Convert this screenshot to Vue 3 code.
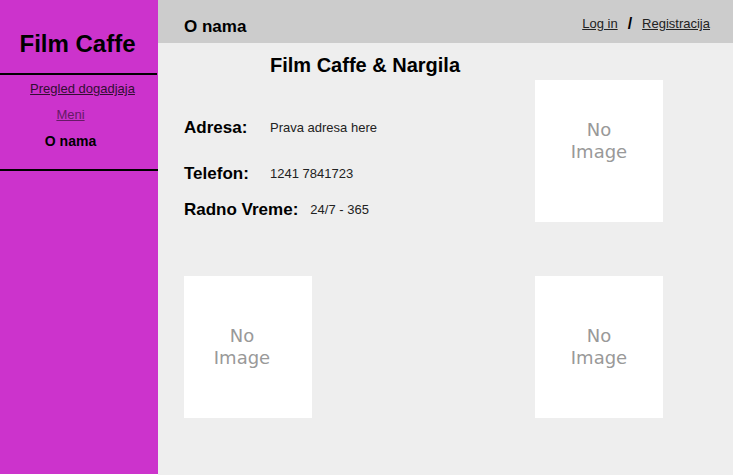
<script setup>
const venue = 'Film Caffe & Nargila'
const details = [
  { label: 'Adresa:', value: 'Prava adresa here' },
  { label: 'Telefon:', value: '1241 7841723' },
  { label: 'Radno Vreme:', value: '24/7 - 365' },
]
</script>

<template>
  <div class="page">
    <aside class="sidebar">
      <div class="brand">Film Caffe</div>
      <nav class="menu">
        <a href="#pregled">Pregled dogadjaja</a>
        <a href="#meni" class="visited">Meni</a>
        <span class="current" aria-current="page">O nama</span>
      </nav>
    </aside>
    <div class="content">
      <header class="topbar">
        <h1>O nama</h1>
        <div class="account">
          <a href="#login">Log in</a>
          <span class="slash">/</span>
          <a href="#registracija">Registracija</a>
        </div>
      </header>
      <main class="about">
        <section class="info">
          <h2>{{ venue }}</h2>
          <dl>
            <div v-for="item in details" :key="item.label" class="row">
              <dt>{{ item.label }}</dt>
              <dd>{{ item.value }}</dd>
            </div>
          </dl>
        </section>
        <div class="photo right top">No<br />Image</div>
        <div class="photo">No<br />Image</div>
        <div class="photo right">No<br />Image</div>
      </main>
    </div>
  </div>
</template>

<style>
body {
  background: #fff;
}
</style>

<style scoped>
.page {
  display: flex;
  min-height: 100vh;
  padding-right: 3px;
  box-sizing: border-box;
  font-family: "Liberation Sans", Arial, sans-serif;
  font-size: 13px;
  line-height: 16px;
  color: #222;
}
.sidebar {
  flex: 0 0 158px;
  margin-bottom: 1px;
  background: #cc33cc;
}
.brand {
  margin-right: 1px;
  padding: 30px 2px 15px 0;
  border-bottom: 2px solid #000;
  font-size: 24px;
  line-height: 28px;
  font-weight: bold;
  text-align: center;
  color: #000;
}
.menu {
  display: flex;
  flex-direction: column;
  align-items: center;
  gap: 10px;
  padding: 6px 17px 20px 0;
  border-bottom: 2px solid #000;
}
a {
  color: #222;
  text-decoration: underline;
}
.menu a:first-child {
  margin-left: 24px;
}
.menu a {
  color: #330d33;
}
.menu .visited {
  color: #661a66;
}
.current {
  font-size: 14px;
  font-weight: bold;
  color: #000;
}
.content {
  flex: 1;
  min-width: 0;
  background: #eee;
}
.topbar {
  display: flex;
  align-items: flex-start;
  justify-content: space-between;
  padding: 16px 23px 6px 26px;
  background: #ccc;
}
h1,
dt {
  margin: 0;
  font-size: 17px;
  line-height: 20px;
  font-weight: bold;
  color: #000;
}
h1 {
  padding-top: 1px;
}
.account {
  display: flex;
  gap: 10px;
}
.slash {
  font-size: 16px;
  font-weight: bold;
  color: #000;
}
.about {
  display: grid;
  grid-template-columns: 1fr 128px;
  row-gap: 54px;
  padding: 10px 70px 56px 26px;
}
h2 {
  margin: 0;
  padding-left: 86px;
  font-size: 20px;
  line-height: 24px;
  color: #000;
}
dl {
  display: flex;
  flex-direction: column;
  gap: 16px;
  margin: 41px 0 2px;
}
.row {
  display: flex;
  align-items: center;
  gap: 12px;
}
.row:first-child {
  margin-bottom: 10px;
}
dt {
  min-width: 74px;
}
dd {
  margin: 0;
}
.photo {
  display: flex;
  align-items: center;
  justify-content: center;
  width: 128px;
  height: 142px;
  padding-right: 12px;
  box-sizing: border-box;
  background: #fff;
  font-family: "DejaVu Sans", sans-serif;
  font-size: 18px;
  line-height: 22px;
  text-align: center;
  color: #999;
}
.right {
  padding-right: 0;
}
.top {
  align-self: end;
  padding-bottom: 20px;
}
</style>
